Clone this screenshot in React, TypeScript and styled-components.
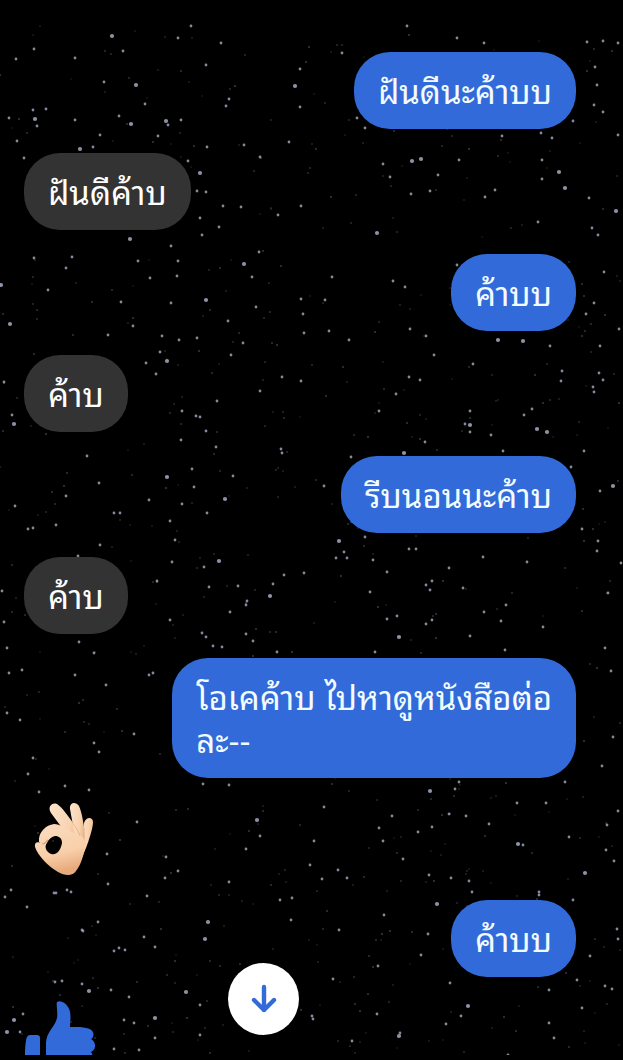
import React from "react";
import styled, { createGlobalStyle } from "styled-components";

const GlobalStyle = createGlobalStyle`
  *, *::before, *::after { box-sizing: border-box; }
  body { margin: 0; background: #000; }
`;

const Page = styled.div`
  display: flex;
  flex-direction: column;
  height: 100vh;
  background: #000;
  font-family: "Liberation Sans", "Noto Sans Thai Looped", "Noto Sans", sans-serif;
`;

const Thread = styled.main`
  position: relative;
  flex: 1;
  min-height: 0;
  overflow: hidden;
`;

const Sky = styled.svg`
  position: absolute;
  inset: 0;
  width: 100%;
  height: 100%;
`;

const MessageList = styled.ul`
  position: relative;
  display: flex;
  flex-direction: column;
  gap: 24px;
  margin: 0;
  padding: 52px 47px 0 24px;
  list-style: none;
`;

const Row = styled.li<{ $mine?: boolean }>`
  display: flex;
  justify-content: ${(p) => (p.$mine ? "flex-end" : "flex-start")};
`;

const Bubble = styled.p<{ $mine?: boolean }>`
  margin: 0;
  max-width: 80%;
  padding: 19px 24px 15px;
  border-radius: 36px;
  background: ${(p) => (p.$mine ? "#326bd9" : "#333333")};
  color: ${(p) => (p.$mine ? "#f2fcff" : "#ffffff")};
  font-size: 33px;
  line-height: 43px;
`;

const HandSticker = styled.svg`
  display: block;
  width: 80px;
  height: 74px;
`;

const LikeSticker = styled.svg`
  display: block;
  width: 72px;
  height: 72px;
`;

const ScrollButton = styled.button`
  position: absolute;
  left: 228px;
  bottom: 20px;
  display: flex;
  align-items: center;
  justify-content: center;
  width: 71px;
  height: 72px;
  padding: 0;
  border: 0;
  border-radius: 50%;
  background: #fff;
  cursor: pointer;
`;

const BottomEdge = styled.div`
  height: 5px;
  background: #000;
`;

// Bright stars, as "x,y" pairs.
const LARGE =
  "112,36 136,85 295,86 35,119 131,124 166,121 80,149 200,173 130,239 244,264 1,285 206,300 10,324 421,159 412,161 559,172 565,188 377,233 616,211 498,340 523,341 14,424 225,499 167,361 167,477 339,541 219,561 270,596 399,637 537,429 613,486 257,820 430,791 518,844 208,922 205,939 437,904 155,1018 399,1036 585,873 468,1006 186,992 404,453 547,432 7,1032 14,1020 89,991 470,425";
const MEDIUM =
  "191,26 178,38 221,43 34,49 123,51 75,58 16,59 206,65 300,69 104,82 229,99 226,106 300,107 145,104 33,110 46,109 9,118 37,126 75,120 119,116 168,125 181,120 17,141 158,136 93,147 100,135 24,158 188,161 244,145 207,147 260,157 289,142 197,191 206,192 223,206 241,207 278,215 301,206 219,227 200,218 202,235 259,252 171,246 34,258 72,257 66,268 138,261 178,261 252,277 150,278 177,276 48,290 301,299 256,307 171,303 121,302 303,314 228,321 133,326 179,340 197,338 162,336 108,335 243,343 304,333 " +
  "407,26 457,38 484,43 342,53 587,42 603,41 618,43 595,67 597,85 594,105 603,112 573,121 502,136 541,133 552,138 618,135 357,118 365,128 383,164 390,177 438,175 459,160 542,160 542,179 495,190 485,197 430,191 411,194 589,198 538,222 592,228 598,235 604,272 332,277 405,287 393,281 325,300 594,303 586,314 329,331 410,329 426,336 550,346 600,346 457,265 349,340 619,329 " +
  "160,352 231,355 146,363 156,374 282,377 301,381 260,391 4,382 12,415 217,401 182,411 196,416 200,417 206,431 181,440 216,447 281,449 282,453 87,456 192,469 233,476 194,487 99,483 66,496 149,500 15,506 182,504 114,513 120,513 207,513 56,525 33,528 28,529 100,545 170,521 175,540 78,556 172,562 157,581 204,567 238,586 247,601 284,575 273,584 304,573 209,587 2,591 4,622 7,648 230,612 246,605 170,620 202,633 206,637 246,634 253,641 277,652 213,646 222,647 94,653 79,642 75,675 9,673 22,670 106,685 149,675 153,673 " +
  "434,355 473,364 409,377 420,380 396,394 561,381 562,371 599,373 603,380 593,387 594,392 532,409 524,415 470,411 465,424 470,432 491,435 379,411 425,442 503,451 584,451 351,457 324,486 600,491 571,467 582,529 598,541 365,537 344,552 347,558 336,558 409,549 416,549 483,557 373,560 387,572 449,568 527,562 597,551 621,563 432,581 426,585 463,588 370,592 430,590 608,593 397,616 506,605 432,620 501,621 426,624 484,612 387,619 543,627 375,652 605,648 505,650 611,671 470,636 " +
  "7,713 20,720 134,734 94,743 99,752 33,758 28,774 65,786 89,790 39,792 137,822 107,854 178,871 165,878 147,896 54,893 11,890 5,897 27,907 166,857 56,893 67,890 71,892 108,884 144,937 155,947 119,948 114,951 125,950 98,922 82,930 62,981 55,982 82,984 111,990 129,997 23,1014 124,1020 134,1023 155,1038 200,1035 114,1049 83,931 139,1050 200,1005 20,1032 " +
  "203,784 229,785 324,807 392,816 459,782 455,789 549,767 565,782 517,803 546,803 449,814 466,816 432,827 379,828 418,832 489,824 383,841 314,841 260,836 246,849 569,837 523,845 310,865 403,859 338,870 429,875 451,878 347,878 322,879 229,882 280,900 292,898 291,920 339,930 469,881 472,892 539,892 539,895 573,900 384,915 428,934 421,955 333,979 378,966 377,1014 461,1016 446,1024 549,1023 554,1038 400,1033 508,1055 352,1041 313,1019 312,1016 582,1008 549,990 577,980 606,850 614,861 618,811 607,825 602,766 613,737 617,929 618,939 590,956 605,986 612,989 450,983";

type Star = { x: number; y: number; r: number; o: number };

const parse = (points: string, r: number, o: number): Star[] =>
  points.split(" ").map((pair) => {
    const [x, y] = pair.split(",").map(Number);
    return { x, y, r, o };
  });

// Fine dust between the bright stars, from a fixed seed so it never flickers.
const makeDust = (count: number): Star[] => {
  let seed = 7919;
  const next = () => {
    seed = (seed * 16807) % 2147483647;
    return seed / 2147483647;
  };
  return Array.from({ length: count }, () => ({
    x: Math.round(next() * 623),
    y: Math.round(26 + next() * 1028),
    r: 0.8,
    o: 0.2 + next() * 0.4,
  }));
};

const stars: Star[] = [...makeDust(620), ...parse(MEDIUM, 1.4, 0.8), ...parse(LARGE, 2.1, 0.85)];

const StarrySky = () => (
  <Sky viewBox="0 0 623 1055" preserveAspectRatio="xMidYMin slice" aria-hidden="true">
    {stars.map((s, i) => (
      <circle key={i} cx={s.x} cy={s.y} r={s.r} fill="#a3adc2" opacity={s.o} />
    ))}
  </Sky>
);

const OkHand = () => (
  <HandSticker viewBox="0 0 80 74" role="img" aria-label="OK hand">
    <defs>
      <linearGradient id="skin" x1="0" y1="0" x2="0.25" y2="1">
        <stop offset="0" stopColor="#fbdcc0" />
        <stop offset="0.65" stopColor="#f8cfa9" />
        <stop offset="1" stopColor="#e8aa7c" />
      </linearGradient>
      <linearGradient id="finger" x1="0" y1="0" x2="1" y2="0.3">
        <stop offset="0" stopColor="#fde3cb" />
        <stop offset="0.7" stopColor="#f9d3b0" />
        <stop offset="1" stopColor="#efbd93" />
      </linearGradient>
    </defs>
    <path d="M56 42 60 21C62 14 69 15 69 20C69 26 65 38 62 46L55 62Z" fill="url(#finger)" />
    <path d="M44 34 27 11C23 5 28 0 33 2C38 5 44 14 50 22L59 40Z" fill="url(#finger)" />
    <path d="M50 29 46 7C45 0 52-1 55 4C58 11 60 21 61 40L57 44Z" fill="url(#finger)" />
    <path
      fillRule="evenodd"
      d="M15 40C14 30 22 23 30 22C36 22 41 26 45 29C49 31 54 32 58 34L62 42C60 52 57 63 52 69C49 74 41 74 34 70C25 65 14 54 11 45C10 40 14 39 18 42ZM23 41C20 44 22 50 27 52C33 54 37 47 38 41C38 36 35 34 31 34C27 35 24 38 23 41Z"
      fill="url(#skin)"
    />
    <path d="M18 42C21 42 22 40 24 38" fill="none" stroke="#cf9163" strokeWidth="1.2" opacity="0.8" />
    <path d="M48 20C52 25 54 29 56 34M60 26V36" fill="none" stroke="#dba478" strokeWidth="1" opacity="0.6" />
  </HandSticker>
);

const ThumbUp = () => (
  <LikeSticker viewBox="0 0 72 72" role="img" aria-label="Like">
    <g fill="#326bd9">
      <path d="M6 34H13Q16 34 16 37V68H5Q1 68 1 52C1 45 2 38 3 36Q4 34 6 34Z" />
      <path d="M22 68V42C22 31 31 26 33 17C34 10 32 4 33 1C36-1 41 1 44 6C48 12 46 20 46 26H56C67 27 71 30 69 36Q68 38 67 38C72 41 73 48 67 51C70 55 69 60 64 62Q64 68 56 68Z" />
    </g>
  </LikeSticker>
);

const ArrowDown = () => (
  <svg width="28" height="30" viewBox="0 0 28 30" aria-hidden="true">
    <path d="M14 3V26M4 16 14 26 24 16" fill="none" stroke="#326bd9" strokeWidth="4.4" strokeLinecap="round" strokeLinejoin="round" />
  </svg>
);

type Message = { mine?: boolean; lines?: string[]; sticker?: React.ReactNode };

const messages: Message[] = [
  { mine: true, lines: ["ฝันดีนะค้าบบ"] },
  { lines: ["ฝันดีค้าบ"] },
  { mine: true, lines: ["ค้าบบ"] },
  { lines: ["ค้าบ"] },
  { mine: true, lines: ["รีบนอนนะค้าบ"] },
  { lines: ["ค้าบ"] },
  { mine: true, lines: ["โอเคค้าบ ไปหาดูหนังสือต่อ", "ละ--"] },
  { sticker: <OkHand /> },
  { mine: true, lines: ["ค้าบบ"] },
  { sticker: <ThumbUp /> },
];

export default function App() {
  return (
    <Page>
      <GlobalStyle />
      <Thread>
        <StarrySky />
        <MessageList>
          {messages.map((m, i) => (
            <Row key={i} $mine={m.mine}>
              {m.sticker ?? (
                <Bubble $mine={m.mine} lang="th">
                  {m.lines?.map((line, n) => (
                    <React.Fragment key={n}>
                      {n > 0 && <br />}
                      {line}
                    </React.Fragment>
                  ))}
                </Bubble>
              )}
            </Row>
          ))}
        </MessageList>
        <ScrollButton type="button" aria-label="Scroll to latest message">
          <ArrowDown />
        </ScrollButton>
      </Thread>
      <BottomEdge />
    </Page>
  );
}
